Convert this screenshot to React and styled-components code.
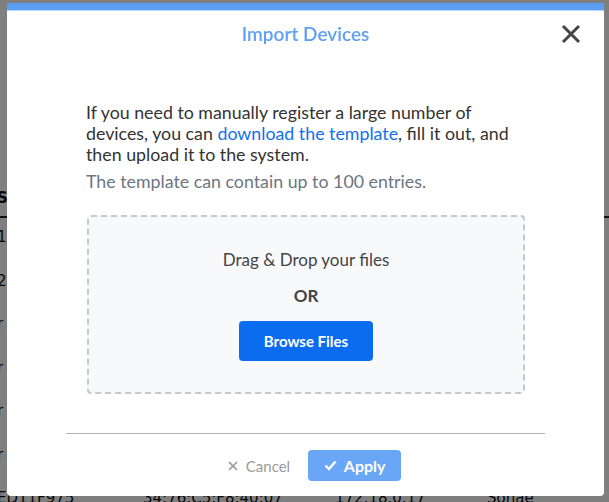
import React from "react";
import styled, { createGlobalStyle } from "styled-components";

const GlobalStyle = createGlobalStyle`
  html, body {
    margin: 0;
    padding: 0;
  }
  body {
    font-family: "Lato", "Noto Sans", "Liberation Sans", sans-serif;
    background: #ffffff;
    overflow: hidden;
  }
`;

const Page = styled.div`
  height: 502px;
  overflow: hidden;
  background: #ffffff;
  color: #111;
  font-family: "DejaVu Sans", sans-serif;
  font-size: 15px;
`;

const PageTitle = styled.div`
  height: 24px;
  margin-top: -20px;
  line-height: 24px;
  text-align: center;
  font-size: 16px;
`;

const TableHead = styled.div`
  margin-top: 176px;
  height: 36px;
  display: grid;
  grid-template-columns: 143px 192px 152px 1fr;
  align-items: center;
  border-bottom: 2px solid #222;
  font-weight: bold;
`;

const TableRow = styled.div`
  height: 43.5px;
  box-sizing: border-box;
  padding-top: 10px;
  line-height: 18px;
  display: grid;
  grid-template-columns: 143px 192px 152px 1fr;
`;

const Cell = styled.span`
  white-space: nowrap;
  overflow: hidden;
  margin-left: ${p => (p.$first ? "-3px" : "0")};
`;

const Overlay = styled.div`
  position: fixed;
  inset: 0;
  background: rgba(0, 0, 0, 0.5);
  padding: 3px 5px 6px 7px;
  box-sizing: border-box;
  display: flex;
`;

const Modal = styled.div`
  flex: 1;
  background: #ffffff;
  border-top: 7px solid #5b9ef2;
  border-radius: 0 0 4px 4px;
  display: flex;
  flex-direction: column;
  font-family: "Lato", "Noto Sans", sans-serif;
`;

const HeaderLine = styled.div`
  height: 1px;
  background: #b8d5fa;
`;

const Header = styled.div`
  position: relative;
  height: 44px;
  display: flex;
  align-items: center;
  justify-content: center;
`;

const Title = styled.h2`
  margin: 0;
  font-size: 19px;
  font-weight: 600;
  color: #5fa1f0;
`;

const CloseButton = styled.button`
  position: absolute;
  right: 22px;
  top: 12px;
  width: 22px;
  height: 22px;
  padding: 0;
  border: none;
  background: none;
  cursor: pointer;
  display: flex;
  align-items: center;
  justify-content: center;
`;

const Body = styled.div`
  flex: 1;
  padding: 47px 0 0 79px;
  width: 440px;
`;

const Lead = styled.p`
  margin: 0;
  font-size: 17.8px;
  line-height: 21px;
  color: #333;
`;

const Link = styled.a`
  color: #1270ee;
  text-decoration: none;
`;

const Note = styled.p`
  margin: 6px 0 0;
  font-size: 17.8px;
  line-height: 21px;
  color: #6c7580;
`;

const DropZone = styled.div`
  margin: 23px 0 0 1px;
  width: 438px;
  height: 179px;
  box-sizing: border-box;
  border: 2px dashed #c8c8c8;
  border-radius: 4px;
  background: #f8f9fa;
  display: flex;
  flex-direction: column;
  align-items: center;
  padding-top: 33px;
`;

const DropText = styled.div`
  font-size: 17px;
  line-height: 20px;
  color: #444;
`;

const OrText = styled.div`
  margin-top: 16px;
  font-size: 17px;
  line-height: 20px;
  font-weight: 700;
  color: #444;
`;

const BrowseButton = styled.button`
  margin-top: 15px;
  width: 134px;
  height: 40px;
  border: none;
  border-radius: 4px;
  background: #0b6cf0;
  color: #ffffff;
  font-family: inherit;
  font-size: 15px;
  font-weight: 700;
  cursor: pointer;
`;

const Divider = styled.hr`
  margin: 0 59px;
  border: none;
  border-top: 1px solid #b5b5b5;
`;

const Footer = styled.div`
  height: 62px;
  box-sizing: border-box;
  padding: 16px 0 0 18px;
  display: flex;
  align-items: flex-start;
  justify-content: center;
  gap: 18px;
`;

const CancelButton = styled.button`
  height: 31px;
  display: flex;
  align-items: center;
  gap: 8px;
  border: none;
  background: none;
  padding: 0;
  font-family: inherit;
  font-size: 15px;
  color: #9a9a9a;
  cursor: pointer;
`;

const ApplyButton = styled.button`
  width: 93px;
  height: 31px;
  display: flex;
  align-items: center;
  justify-content: center;
  gap: 7px;
  border: none;
  border-radius: 4px;
  background: #6aa6f6;
  color: #ffffff;
  font-family: inherit;
  font-size: 16px;
  font-weight: 700;
`;

const rows = [
  ["1", "", "", ""],
  ["2", "", "", ""],
  ["r", "", "", ""],
  ["r", "", "", ""],
  ["r", "", "", ""],
  ["r", "", "", ""],
  ["ED11F975", "34:76:C5:F8:40:07", "172.18.0.17", "Sonae"],
];

const XIcon = ({ size, color, width }) => (
  <svg width={size} height={size} viewBox="0 0 20 20">
    <path
      d="M2 2 L18 18 M18 2 L2 18"
      stroke={color}
      strokeWidth={width}
      strokeLinecap="butt"
    />
  </svg>
);

const CheckIcon = () => (
  <svg width="13" height="11" viewBox="0 0 13 11">
    <path
      d="M1.5 5.5 L5 9 L11.5 1.5"
      fill="none"
      stroke="#ffffff"
      strokeWidth="2.4"
    />
  </svg>
);

export default function App() {
  return (
    <>
      <GlobalStyle />
      <Page>
        <PageTitle>IoT Management</PageTitle>
        <TableHead>
          <Cell $first>Serial</Cell>
          <Cell>MAC</Cell>
          <Cell>IP</Cell>
          <Cell>Name</Cell>
        </TableHead>
        {rows.map((r, i) => (
          <TableRow key={i}>
            <Cell $first>{r[0]}</Cell>
            <Cell>{r[1]}</Cell>
            <Cell>{r[2]}</Cell>
            <Cell>{r[3]}</Cell>
          </TableRow>
        ))}
      </Page>
      <Overlay>
        <Modal>
          <HeaderLine />
          <Header>
            <Title>Import Devices</Title>
            <CloseButton aria-label="Close">
              <XIcon size={20} color="#444" width={3} />
            </CloseButton>
          </Header>
          <Body>
            <Lead>
              If you need to manually register a large number of devices, you
              can <Link href="#">download the template</Link>, fill it out, and
              then upload it to the system.
            </Lead>
            <Note>The template can contain up to 100 entries.</Note>
            <DropZone>
              <DropText>Drag &amp; Drop your files</DropText>
              <OrText>OR</OrText>
              <BrowseButton>Browse Files</BrowseButton>
            </DropZone>
          </Body>
          <Divider />
          <Footer>
            <CancelButton>
              <XIcon size={10} color="#9a9a9a" width={3.4} />
              Cancel
            </CancelButton>
            <ApplyButton disabled>
              <CheckIcon />
              Apply
            </ApplyButton>
          </Footer>
        </Modal>
      </Overlay>
    </>
  );
}
